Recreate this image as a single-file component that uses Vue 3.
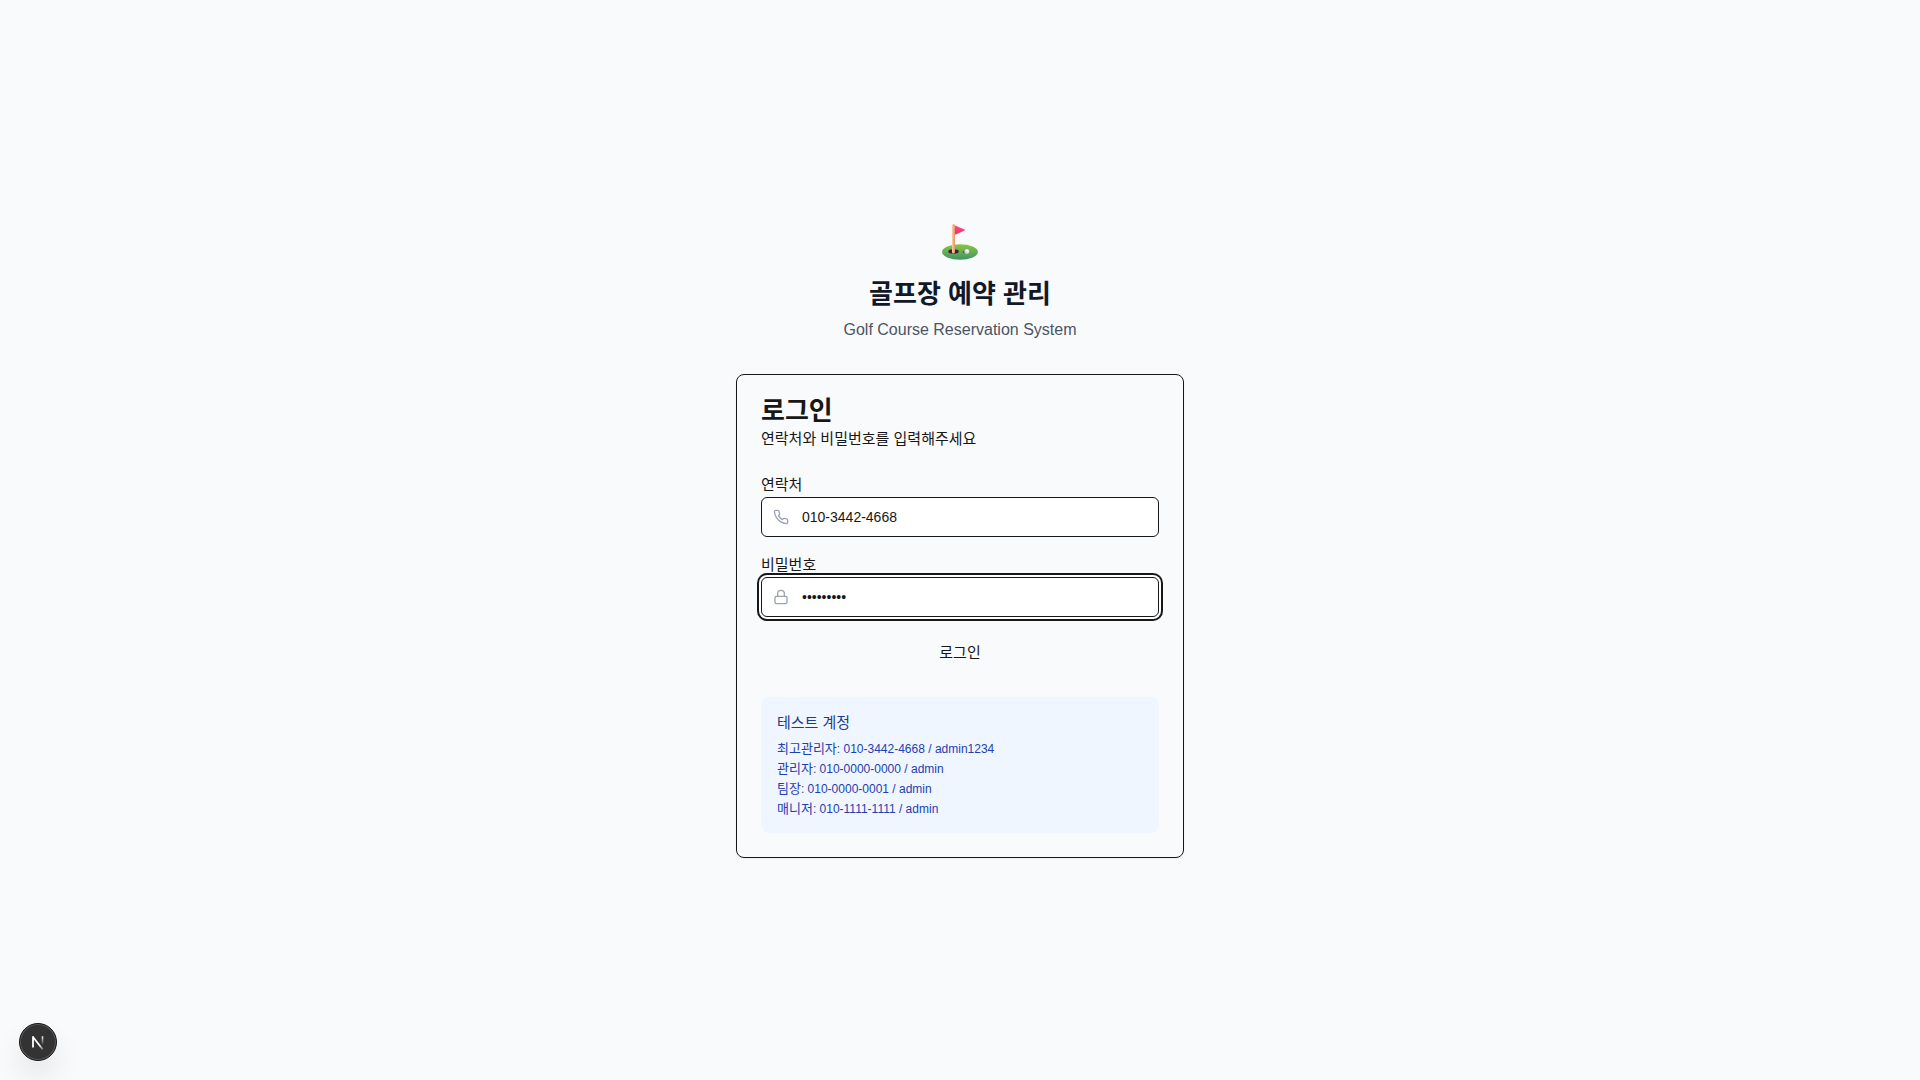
<script setup>
import { ref } from 'vue'

const phone = ref('010-3442-4668')
const password = ref('admin1234')

const accounts = [
  { role: '최고관리자', login: '010-3442-4668 / admin1234' },
  { role: '관리자', login: '010-0000-0000 / admin' },
  { role: '팀장', login: '010-0000-0001 / admin' },
  { role: '매니저', login: '010-1111-1111 / admin' },
]
</script>

<template>
  <main class="page">
    <div class="column">
      <header class="brand">
        <svg class="flag" viewBox="0 0 36 36" role="img" aria-label="Golf">
          <defs>
            <linearGradient id="green" x1="0" y1="0" x2="0" y2="1">
              <stop offset="0" stop-color="#8cc63f" />
              <stop offset="1" stop-color="#3f9468" />
            </linearGradient>
            <linearGradient id="pole" x1="0" y1="0" x2="1" y2="0">
              <stop offset="0" stop-color="#ffd0a0" />
              <stop offset="1" stop-color="#dd9273" />
            </linearGradient>
            <linearGradient id="pennant" x1="0" y1="0" x2="0" y2="1">
              <stop offset="0" stop-color="#ff4d80" />
              <stop offset="1" stop-color="#f22d72" />
            </linearGradient>
            <radialGradient id="ball" cx="0.6" cy="0.35" r="0.7">
              <stop offset="0" stop-color="#ffffff" />
              <stop offset="1" stop-color="#bdb9c6" />
            </radialGradient>
          </defs>
          <ellipse cx="18" cy="28" rx="18" ry="7.8" fill="url(#green)" />
          <ellipse cx="11.5" cy="27.5" rx="5.2" ry="2.2" fill="#33213f" />
          <ellipse cx="22.8" cy="28" rx="2.2" ry="1.2" fill="#3c7040" />
          <path d="M12.5 1.2 22.6 5.6Q23.2 6 22.6 6.4L12.5 11Z" fill="url(#pennant)" />
          <rect x="10" y="0" width="3" height="29.5" rx="1.5" fill="url(#pole)" />
          <circle cx="24.8" cy="27.4" r="2.5" fill="url(#ball)" />
        </svg>
        <h1>골프장 예약 관리</h1>
        <p>Golf Course Reservation System</p>
      </header>

      <section class="card">
        <h2>로그인</h2>
        <p class="description">연락처와 비밀번호를 입력해주세요</p>

        <form @submit.prevent>
          <div class="field">
            <label for="phone">연락처</label>
            <div class="control">
              <svg class="icon" viewBox="0 0 24 24" aria-hidden="true">
                <path d="M22 16.92v3a2 2 0 0 1-2.18 2 19.79 19.79 0 0 1-8.63-3.07 19.5 19.5 0 0 1-6-6 19.79 19.79 0 0 1-3.07-8.67A2 2 0 0 1 4.11 2h3a2 2 0 0 1 2 1.72 12.84 12.84 0 0 0 .7 2.81 2 2 0 0 1-.45 2.11L8.09 9.91a16 16 0 0 0 6 6l1.27-1.27a2 2 0 0 1 2.11-.45 12.84 12.84 0 0 0 2.81.7A2 2 0 0 1 22 16.92z" />
              </svg>
              <input id="phone" v-model="phone" type="tel" />
            </div>
          </div>
          <div class="field">
            <label for="password">비밀번호</label>
            <div class="control active">
              <svg class="icon" viewBox="0 0 24 24" aria-hidden="true">
                <rect x="3" y="11" width="18" height="11" rx="2" />
                <path d="M7 11V7a5 5 0 0 1 10 0v4" />
              </svg>
              <input id="password" v-model="password" type="password" />
            </div>
          </div>
          <button class="submit" type="submit">로그인</button>
        </form>

        <aside class="accounts">
          <h3>테스트 계정</h3>
          <ul>
            <li v-for="account in accounts" :key="account.role">
              <span class="role">{{ account.role }}</span>: {{ account.login }}
            </li>
          </ul>
        </aside>
      </section>
    </div>

    <button class="devtools" type="button" aria-label="Open Next.js Dev Tools">
      <svg viewBox="0 0 36 36" aria-hidden="true">
        <defs>
          <linearGradient id="diagonal" gradientUnits="userSpaceOnUse" x1="17" y1="18" x2="23" y2="26">
            <stop offset="0.4" stop-color="#fff" />
            <stop offset="1" stop-color="#fff" stop-opacity="0.2" />
          </linearGradient>
          <linearGradient id="stem" gradientUnits="userSpaceOnUse" x1="23" y1="12" x2="23" y2="21">
            <stop offset="0" stop-color="#fff" />
            <stop offset="1" stop-color="#fff" stop-opacity="0" />
          </linearGradient>
        </defs>
        <path d="M13 13 22.800 25.500" stroke="url(#diagonal)" stroke-width="1.800" />
        <path d="M13 23.500V12.300" stroke="#fff" stroke-width="1.800" />
        <path d="M22.500 12.300V21" stroke="url(#stem)" stroke-width="1.600" />
      </svg>
    </button>
  </main>
</template>

<style>
body {
  margin: 0;
  background: #f9fafc;
}
</style>

<style scoped>
.page {
  box-sizing: border-box;
  min-height: 100vh;
  padding: 16px;
  display: flex;
  align-items: center;
  justify-content: center;
  color: #171717;
  font-family: "Liberation Sans", "Noto Sans CJK KR", Arial, sans-serif;
}

h1,
h2,
h3,
p,
ul {
  margin: 0;
  padding: 0;
}

.column {
  width: 100%;
  max-width: 448px;
}

.brand {
  display: flex;
  flex-direction: column;
  align-items: center;
  padding-top: 2px;
  margin-bottom: 32px;
}

.flag {
  width: 36px;
  height: 36px;
  margin-bottom: 18px;
}

h1 {
  color: #111827;
  font-size: 26px;
  line-height: 32px;
  margin-bottom: 8px;
}

.brand p {
  color: #4b5563;
  font-size: 16px;
  line-height: 24px;
}

.card {
  padding: 24px;
  border: 1px solid #171717;
  border-radius: 8px;
  box-shadow: 0 1px 2px rgba(0, 0, 0, 0.05);
}

h2 {
  font-size: 26px;
  line-height: 24px;
  margin-bottom: 6px;
}

.description {
  font-size: 15px;
  line-height: 20px;
  margin-bottom: 26px;
}

form {
  display: flex;
  flex-direction: column;
  gap: 18px;
}

.field {
  display: flex;
  flex-direction: column;
  gap: 2px;
}

label {
  font-size: 15px;
  line-height: 20px;
}

.control {
  box-sizing: border-box;
  height: 40px;
  padding: 0 12px 0 11px;
  display: flex;
  align-items: center;
  gap: 13px;
  border: 1px solid #171717;
  border-radius: 6px;
  background: #fff;
}

.active {
  box-shadow: 0 0 0 2px #fff, 0 0 0 4px #171717;
}

.icon {
  width: 16px;
  height: 16px;
  flex: none;
  fill: none;
  stroke: #9ca3af;
  stroke-width: 2;
  stroke-linecap: round;
  stroke-linejoin: round;
}

input {
  flex: 1;
  min-width: 0;
  height: 20px;
  padding: 0;
  border: 0;
  outline: 0;
  background: transparent;
  color: #171717;
  font-family: inherit;
  font-size: 14px;
}

.submit {
  height: 38px;
  padding: 0 16px 6px;
  border: 0;
  border-radius: 6px;
  background: transparent;
  color: #171717;
  font-family: inherit;
  font-size: 15px;
  cursor: pointer;
}

.accounts {
  margin-top: 24px;
  padding: 16px;
  border-radius: 8px;
  background: #eff6ff;
}

h3 {
  margin-bottom: 8px;
  color: #1e3a8a;
  font-size: 15px;
  font-weight: 400;
  line-height: 20px;
}

ul {
  display: flex;
  flex-direction: column;
  gap: 4px;
  list-style: none;
}

li {
  color: #1e40af;
  font-size: 12px;
  line-height: 16px;
  height: 16px;
}

.role {
  font-size: 13px;
}

.devtools {
  position: fixed;
  left: 19px;
  bottom: 19px;
  width: 38px;
  height: 38px;
  padding: 0;
  border: 1px solid #171717;
  border-radius: 50%;
  background: #333;
  box-shadow: inset 0 0 0 1px #5a5a5a, 0 16px 32px -8px rgba(0, 0, 0, 0.24);
  cursor: pointer;
}

.devtools svg {
  display: block;
  width: 36px;
  height: 36px;
}
</style>
